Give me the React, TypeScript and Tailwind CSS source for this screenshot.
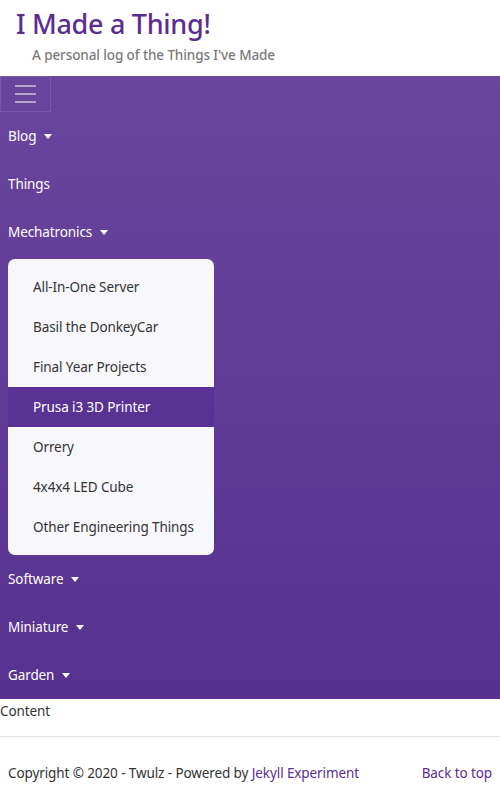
import React from "react";

const font = { fontFamily: '"Segoe UI", "Noto Sans", "Open Sans", sans-serif' };

function Caret() {
  return <span className="ml-[8px] inline-block w-0 h-0 border-l-[4.5px] border-r-[4.5px] border-t-[5px] border-l-transparent border-r-transparent border-t-white align-middle" />;
}

function NavItem({ label, caret }: { label: string; caret?: boolean }) {
  return (
    <div className="h-12 flex items-center px-2 text-[13.5px] tracking-[-0.1px] text-white">
      <span>{label}</span>
      {caret && <Caret />}
    </div>
  );
}

const things = [
  "All-In-One Server",
  "Basil the DonkeyCar",
  "Final Year Projects",
  "Prusa i3 3D Printer",
  "Orrery",
  "4x4x4 LED Cube",
  "Other Engineering Things",
];

export default function App() {
  return (
    <div className="w-[500px] bg-white" style={font}>
      {/* NOTE Header */}
      <div className="h-[76px] pt-[6px]">
        <h1 className="ml-4 text-[27px] leading-[36px] font-medium tracking-[-0.3px] text-[#5b2d92]">I Made a Thing!</h1>
        <p className="ml-8 mt-[3px] text-[13.5px] leading-5 font-medium tracking-[-0.1px] text-[#7a7a7a]">A personal log of the Things I've Made</p>
      </div>

      {/* NOTE Navbar */}
      <nav className="bg-gradient-to-b from-[#6a459d] to-[#57318f]">
        <button className="w-[51px] h-[36px] border border-white/10 flex flex-col items-center justify-center gap-[6px]">
          <span className="block w-[21px] h-[2px] bg-white/50" />
          <span className="block w-[21px] h-[2px] bg-white/50" />
          <span className="block w-[21px] h-[2px] bg-white/50" />
        </button>
        <NavItem label="Blog" caret />
        <NavItem label="Things" />
        <NavItem label="Mechatronics" caret />
        <div className="ml-2 mt-[3px] w-[206px] rounded-[7px] bg-[#f8f7fc] py-2">
          {things.map((t) => (
            <div
              key={t}
              className={
                t === "Prusa i3 3D Printer"
                  ? "h-10 flex items-center pl-[25px] text-[13.5px] tracking-[-0.1px] bg-[#5a3294] text-white"
                  : "h-10 flex items-center pl-[25px] text-[13.5px] tracking-[-0.1px] text-[#333]"
              }
            >
              {t}
            </div>
          ))}
        </div>
        <NavItem label="Software" caret />
        <NavItem label="Miniature" caret />
        <NavItem label="Garden" caret />
      </nav>

      {/* NOTE Content */}
      <div className="h-[37px] text-[13.5px] leading-6 tracking-[-0.1px] text-[#333]">Content</div>
      <div className="border-t border-[#e5e5e5]" />
      <footer className="flex justify-between px-2 pt-[26px] text-[13.5px] tracking-[-0.1px] text-[#333]">
        <span>
          Copyright © 2020 - Twulz - Powered by <span className="text-[#5b2d92]">Jekyll Experiment</span>
        </span>
        <span className="text-[#5b2d92]">Back to top</span>
      </footer>
    </div>
  );
}
